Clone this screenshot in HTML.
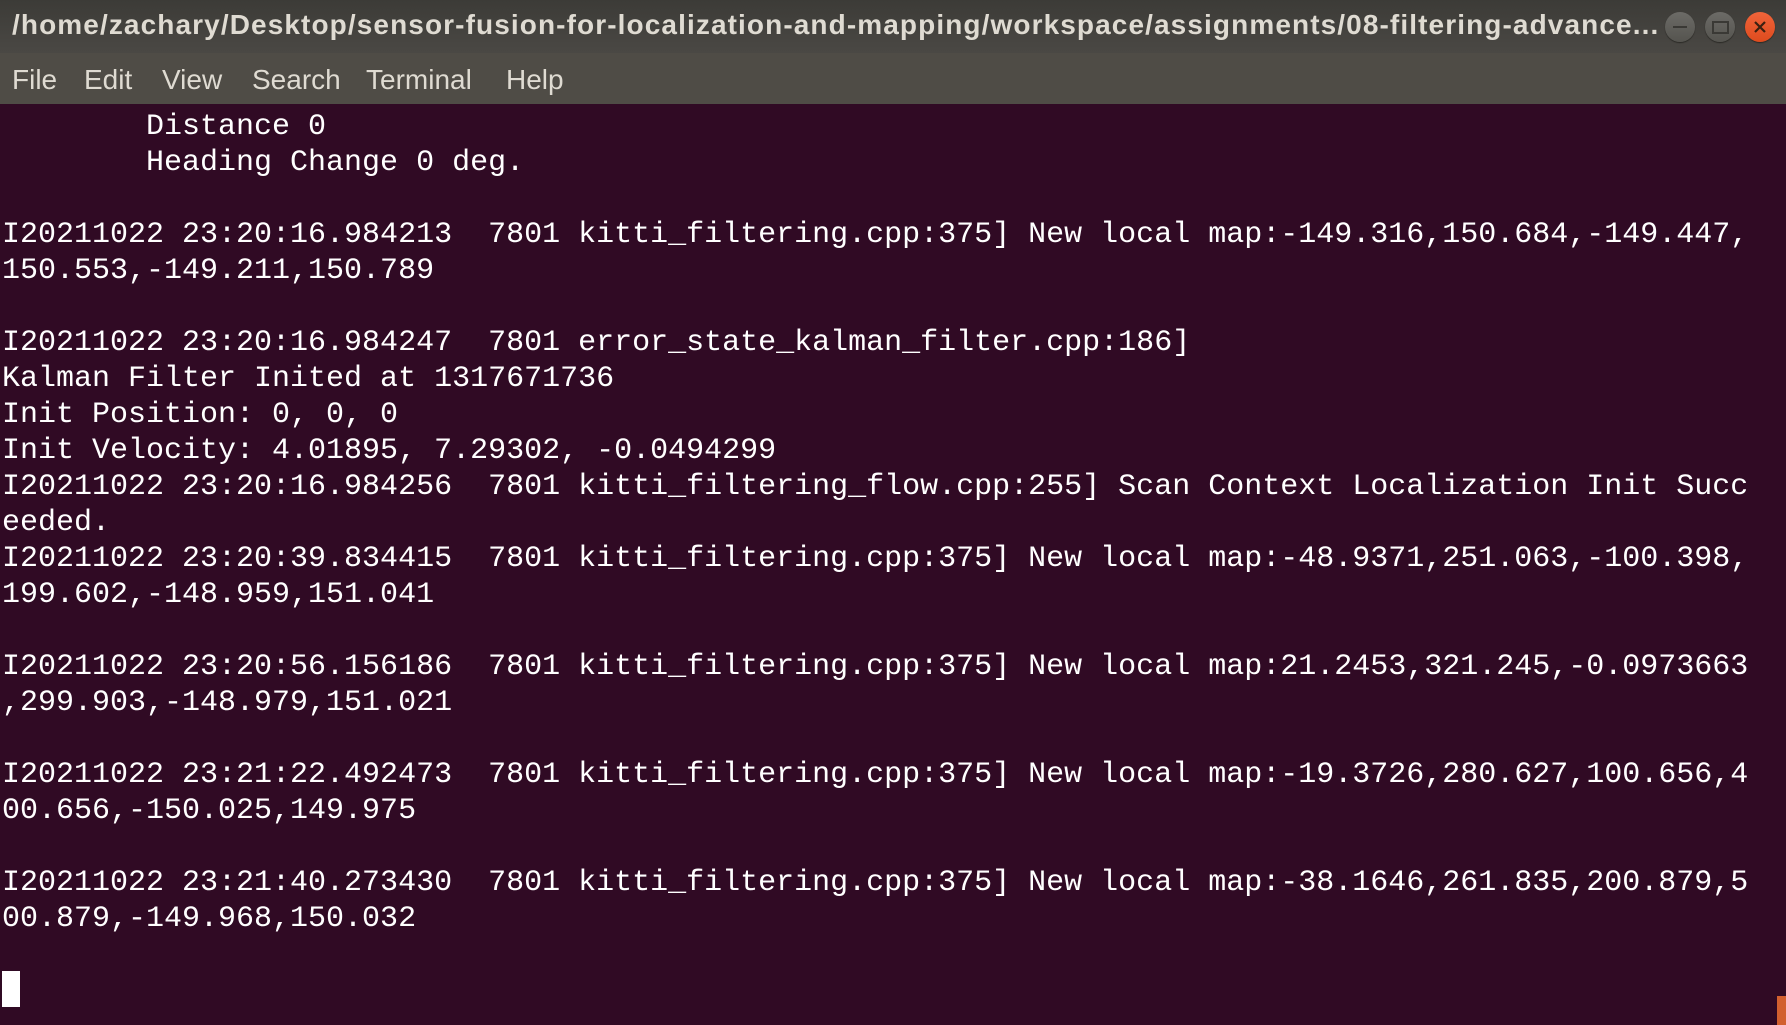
<!DOCTYPE html>
<html><head><meta charset="utf-8"><style>
html,body{margin:0;padding:0;width:1786px;height:1025px;overflow:hidden;background:#300a24;}
#title{position:absolute;left:0;top:0;width:1786px;height:53px;background:linear-gradient(#3c3b37,#4a4844);}
#ttext{position:absolute;left:12px;top:9px;white-space:nowrap;font:bold 28px "Liberation Sans",sans-serif;color:#dfdbd2;letter-spacing:1.1px;}
.btn{position:absolute;top:12px;width:30px;height:30px;border-radius:50%;background:linear-gradient(#6c6b67,#55544f);box-shadow:0 1px 1px #2a2925;}
#menu{position:absolute;left:0;top:53px;width:1786px;height:51px;background:#4f4c46;}
#menu span{position:absolute;top:11px;font:28px "Liberation Sans",sans-serif;color:#dfdbd2;}
#term{position:absolute;left:2px;top:109px;margin:0;font:30px/36px "Liberation Mono",monospace;color:#fff;white-space:pre;}
#cur{position:absolute;left:2px;top:971px;width:18px;height:36px;background:#fff;}
#sb{position:absolute;left:1777px;top:996px;width:9px;height:29px;background:#d2602f;}
</style></head><body>
<div id="title"><div id="ttext">/home/zachary/Desktop/sensor-fusion-for-localization-and-mapping/workspace/assignments/08-filtering-advance...</div>
<div class="btn" style="left:1665px"><div style="position:absolute;left:8px;top:14px;width:14px;height:2px;background:#3a3935"></div></div>
<div class="btn" style="left:1705px"><div style="position:absolute;left:7px;top:9px;width:13px;height:9px;border:2px solid #3a3935"></div></div>
<div class="btn" style="left:1745px;background:linear-gradient(#f0643a,#de4b1e)"><svg width="30" height="30" style="position:absolute;left:0;top:0"><path d="M10 10L20 20M20 10L10 20" stroke="#3a2010" stroke-width="2.2"/></svg></div>
</div>
<div id="menu"><span style="left:12px">File</span><span style="left:84px">Edit</span><span style="left:162px">View</span><span style="left:252px">Search</span><span style="left:366px">Terminal</span><span style="left:506px">Help</span></div>
<pre id="term">        Distance 0
        Heading Change 0 deg.

I20211022 23:20:16.984213  7801 kitti_filtering.cpp:375] New local map:-149.316,150.684,-149.447,
150.553,-149.211,150.789

I20211022 23:20:16.984247  7801 error_state_kalman_filter.cpp:186]
Kalman Filter Inited at 1317671736
Init Position: 0, 0, 0
Init Velocity: 4.01895, 7.29302, -0.0494299
I20211022 23:20:16.984256  7801 kitti_filtering_flow.cpp:255] Scan Context Localization Init Succ
eeded.
I20211022 23:20:39.834415  7801 kitti_filtering.cpp:375] New local map:-48.9371,251.063,-100.398,
199.602,-148.959,151.041

I20211022 23:20:56.156186  7801 kitti_filtering.cpp:375] New local map:21.2453,321.245,-0.0973663
,299.903,-148.979,151.021

I20211022 23:21:22.492473  7801 kitti_filtering.cpp:375] New local map:-19.3726,280.627,100.656,4
00.656,-150.025,149.975

I20211022 23:21:40.273430  7801 kitti_filtering.cpp:375] New local map:-38.1646,261.835,200.879,5
00.879,-149.968,150.032
</pre>
<div id="cur"></div>
<div id="sb"></div>
</body></html>
